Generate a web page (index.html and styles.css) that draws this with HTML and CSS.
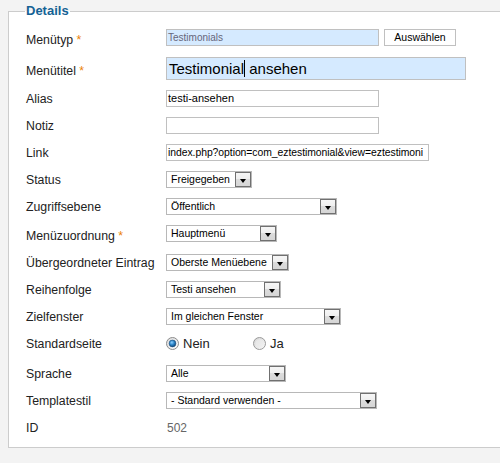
FILE: index.html
```html
<!DOCTYPE html>
<html lang="de">
<head>
<meta charset="utf-8">
<title>Details</title>
<link rel="stylesheet" href="styles.css">
</head>
<body>
<div class="page">
  <fieldset class="details">
    <legend>Details</legend>
    <ul class="form">
      <li class="row row-first">
        <span class="lbl req">Menütyp <span class="star">*</span></span>
        <div class="ctl">
          <span class="field readonly w-type">Testimonials</span>
          <span class="btn">Auswählen</span>
        </div>
      </li>
      <li class="row row-tall">
        <span class="lbl req">Menütitel <span class="star">*</span></span>
        <div class="ctl">
          <span class="field focus w-title">Testimonial<span class="caret"></span> ansehen</span>
        </div>
      </li>
      <li class="row">
        <span class="lbl">Alias</span>
        <div class="ctl"><span class="field w-text">testi-ansehen</span></div>
      </li>
      <li class="row">
        <span class="lbl">Notiz</span>
        <div class="ctl"><span class="field w-text"></span></div>
      </li>
      <li class="row">
        <span class="lbl">Link</span>
        <div class="ctl"><span class="field link w-link">index.php?option=com_eztestimonial&amp;view=eztestimoni</span></div>
      </li>
      <li class="row">
        <span class="lbl">Status</span>
        <div class="ctl"><div class="select w-status"><span class="val">Freigegeben</span><span class="arrow"></span></div></div>
      </li>
      <li class="row">
        <span class="lbl">Zugriffsebene</span>
        <div class="ctl"><div class="select w-access"><span class="val">Öffentlich</span><span class="arrow"></span></div></div>
      </li>
      <li class="row row-menu">
        <span class="lbl req">Menüzuordnung <span class="star">*</span></span>
        <div class="ctl"><div class="select w-menu"><span class="val">Hauptmenü</span><span class="arrow"></span></div></div>
      </li>
      <li class="row">
        <span class="lbl">Übergeordneter Eintrag</span>
        <div class="ctl"><div class="select w-parent"><span class="val">Oberste Menüebene</span><span class="arrow"></span></div></div>
      </li>
      <li class="row">
        <span class="lbl">Reihenfolge</span>
        <div class="ctl"><div class="select w-order"><span class="val">Testi ansehen</span><span class="arrow"></span></div></div>
      </li>
      <li class="row">
        <span class="lbl">Zielfenster</span>
        <div class="ctl"><div class="select w-target"><span class="val">Im gleichen Fenster</span><span class="arrow"></span></div></div>
      </li>
      <li class="row row-radio">
        <span class="lbl">Standardseite</span>
        <div class="ctl radios">
          <span class="opt opt-first">
            <svg class="radio" width="13" height="13" viewBox="0 0 13 13">
              <defs>
                <linearGradient id="rbg1" x1="0" y1="0" x2="1" y2="1">
                  <stop offset="0" stop-color="#d9d9d9"/>
                  <stop offset="1" stop-color="#ffffff"/>
                </linearGradient>
                <radialGradient id="rdot" cx="0.4" cy="0.35" r="0.7">
                  <stop offset="0" stop-color="#8fd0ff"/>
                  <stop offset="0.5" stop-color="#2a84c8"/>
                  <stop offset="1" stop-color="#0d3f6e"/>
                </radialGradient>
              </defs>
              <circle cx="6.5" cy="6.5" r="6" fill="url(#rbg1)" stroke="#8c8c8c" stroke-width="1"/>
              <circle cx="6.5" cy="6.5" r="3.4" fill="url(#rdot)" stroke="#1d4e7c" stroke-width="0.6"/>
            </svg>
            <span class="optlbl">Nein</span>
          </span>
          <span class="opt">
            <svg class="radio" width="13" height="13" viewBox="0 0 13 13">
              <defs>
                <linearGradient id="rbg2" x1="0" y1="0" x2="1" y2="1">
                  <stop offset="0" stop-color="#d4d4d4"/>
                  <stop offset="1" stop-color="#fbfbfb"/>
                </linearGradient>
              </defs>
              <circle cx="6.5" cy="6.5" r="6" fill="url(#rbg2)" stroke="#9a9a9a" stroke-width="1"/>
              <circle cx="6.5" cy="6.5" r="4" fill="#ececec" opacity="0.6"/>
            </svg>
            <span class="optlbl">Ja</span>
          </span>
        </div>
      </li>
      <li class="row">
        <span class="lbl">Sprache</span>
        <div class="ctl"><div class="select w-lang"><span class="val">Alle</span><span class="arrow"></span></div></div>
      </li>
      <li class="row">
        <span class="lbl">Templatestil</span>
        <div class="ctl"><div class="select w-tpl"><span class="val">- Standard verwenden -</span><span class="arrow"></span></div></div>
      </li>
      <li class="row row-last">
        <span class="lbl">ID</span>
        <div class="ctl"><span class="idval">502</span></div>
      </li>
    </ul>
  </fieldset>
</div>
</body>
</html>
```
FILE: styles.css
```css
* { box-sizing: border-box; }
html, body { margin: 0; padding: 0; }
body {
  background: #f3f3f3;
  font-family: "Liberation Sans", Arial, Helvetica, sans-serif;
  width: 500px;
  height: 463px;
  overflow: hidden;
  color: #222;
}
.page { padding: 4px 0 0 8px; }
.details {
  margin: 0;
  width: 492px;
  border: 1px solid #cccccc;
  border-right: 0;
  background: #ffffff;
  padding: 11px 0 11px 17px;
  min-width: 0;
}
.details legend {
  padding: 0 1px;
  margin-left: -1px;
  font-size: 13px;
  line-height: 14px;
  font-weight: bold;
  color: #146295;
}
.form { list-style: none; margin: 0; padding: 0; }
.row {
  display: flex;
  align-items: center;
  height: 17px;
  margin-bottom: 10px;
}
.row-first { margin-bottom: 11px; }
.row-tall { height: 23px; }
.row-menu { margin-bottom: 12px; }
.row-radio { margin-bottom: 13px; }
.row-last { margin-bottom: 0; }
.lbl {
  flex: none;
  width: 140px;
  font-size: 12.3px;
  line-height: 14px;
  color: #222;
  white-space: nowrap;
}
.lbl.req { padding-top: 5px; }
.star { color: #eb8207; }
.ctl { display: flex; align-items: center; }
.field {
  display: block;
  height: 17px;
  border: 1px solid #c0c0c0;
  background: #fff;
  font-size: 11px;
  line-height: 15px;
  padding: 0 1px;
  color: #000;
  white-space: nowrap;
  overflow: hidden;
}
.link { font-size: 10.4px; letter-spacing: -0.05px; }
.readonly { background: #d5eaff; color: #66667a; font-size: 10px; }
.focus {
  background: #d5eaff;
  height: 23px;
  font-size: 15px;
  line-height: 21px;
  padding: 0 2px;
}
.caret {
  display: inline-block;
  width: 1px;
  height: 17px;
  background: #000;
  vertical-align: -3px;
}
.w-type { width: 213px; }
.w-title { width: 300px; }
.w-text { width: 213px; }
.w-link { width: 263px; }
.btn {
  display: block;
  margin-left: 5px;
  width: 72px;
  height: 17px;
  border: 1px solid #c0c0c0;
  background: #fff;
  font-size: 10.5px;
  line-height: 15px;
  text-align: center;
  color: #000;
}
.select {
  display: flex;
  height: 17px;
  border: 1px solid #b8b8b8;
  background: #fff;
}
.select .val {
  flex: 1;
  min-width: 0;
  font-size: 10.5px;
  line-height: 15px;
  padding-left: 4px;
  color: #000;
  white-space: nowrap;
  overflow: hidden;
}
.select .arrow {
  flex: none;
  width: 16px;
  height: 15px;
  border: 1px solid #707070;
  background: linear-gradient(to bottom, #f6f6f6 0%, #efefef 45%, #dcdcdc 50%, #d6d6d6 100%);
  display: flex;
  align-items: flex-end;
  justify-content: center;
  padding-bottom: 3px;
}
.select .arrow::after {
  content: "";
  width: 0;
  height: 0;
  border-left: 3.5px solid transparent;
  border-right: 3.5px solid transparent;
  border-top: 4px solid #000;
}
.w-status { width: 86px; }
.w-access { width: 171px; }
.w-menu { width: 111px; }
.w-parent { width: 123px; }
.w-order { width: 115px; }
.w-target { width: 175px; }
.w-lang { width: 120px; }
.w-tpl { width: 211px; }
.radios { height: 17px; }
.opt { display: flex; align-items: center; }
.opt-first { width: 87px; }
.radio { display: block; flex: none; }
.optlbl { margin-left: 4px; font-size: 13px; line-height: 15px; color: #222; }
.idval { padding-left: 1px; font-size: 12px; color: #666; line-height: 14px; }
```
